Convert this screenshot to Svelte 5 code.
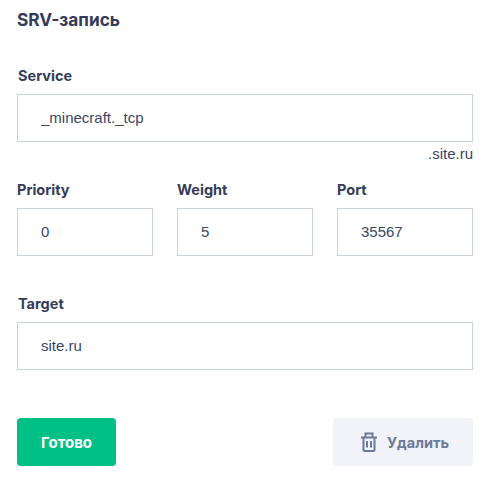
<script>
  let service = "_minecraft._tcp";
  let priority = "0";
  let weight = "5";
  let port = "35567";
  let target = "site.ru";
</script>

<div class="form">
  <h2>SRV-запись</h2>

  <div class="field service">
    <label for="service">Service</label>
    <input id="service" bind:value={service} />
    <span class="suffix">.site.ru</span>
  </div>

  <div class="row">
    <div class="field">
      <label for="priority">Priority</label>
      <input id="priority" bind:value={priority} />
    </div>
    <div class="field">
      <label for="weight">Weight</label>
      <input id="weight" bind:value={weight} />
    </div>
    <div class="field">
      <label for="port">Port</label>
      <input id="port" bind:value={port} />
    </div>
  </div>

  <div class="field target">
    <label for="target">Target</label>
    <input id="target" bind:value={target} />
  </div>

  <div class="actions">
    <button class="done">Готово</button>
    <button class="remove">
      <svg width="16" height="20" viewBox="0 0 16 20" fill="none" stroke="#6b7a99" stroke-width="2">
        <path d="M0 5.5h16M4.5 5.5V1.5h7v4M2.5 5.5V18a1 1 0 0 0 1 1h9a1 1 0 0 0 1-1V5.5M6 9v6.5M10 9v6.5" />
      </svg>
      Удалить
    </button>
  </div>
</div>

<style>
:global(body) {
  background: white;
}

.form {
  width: 456px;
  padding: 10px 9px 0 17px;
  font-family: "Liberation Sans", Arial, sans-serif;
  color: #3b4566;
}

h2 {
  margin: 0;
  font-family: Inter, sans-serif;
  font-size: 17.3px;
  line-height: 20px;
  font-weight: 700;
  color: #343c5a;
}

.field {
  display: flex;
  flex-direction: column;
}

label {
  font-family: Inter, sans-serif;
  font-size: 14.5px;
  line-height: 18px;
  font-weight: 700;
  color: #343c5a;
  margin-bottom: 9px;
}

.service {
  margin-top: 37px;
}

.service label,
.target label {
  margin-left: 1px;
}

input {
  box-sizing: border-box;
  width: 100%;
  height: 48px;
  padding: 0 23px 2px;
  border: 1px solid #c9d2de;
  border-radius: 0;
  outline: none;
  font-family: "Liberation Sans", Arial, sans-serif;
  font-size: 15px;
  color: #3b4566;
}

.suffix {
  align-self: flex-end;
  font-size: 15px;
  line-height: 16px;
  margin-top: 4px;
}

.row {
  display: grid;
  grid-template-columns: repeat(3, 136px);
  justify-content: space-between;
  margin-top: 19px;
}

.target {
  margin-top: 39px;
}

.actions {
  display: flex;
  justify-content: space-between;
  margin-top: 48px;
}

button {
  height: 48px;
  border: none;
  border-radius: 4px;
  font-family: Inter, sans-serif;
  font-size: 15px;
  font-weight: 700;
  cursor: pointer;
}

.done {
  width: 99px;
  background: #00c085;
  color: white;
}

.remove {
  display: flex;
  align-items: center;
  justify-content: center;
  gap: 10px;
  width: 140px;
  padding: 0 0 0 4px;
  font-size: 14.5px;
  background: #f1f3f9;
  color: #6b7a99;
}
</style>
